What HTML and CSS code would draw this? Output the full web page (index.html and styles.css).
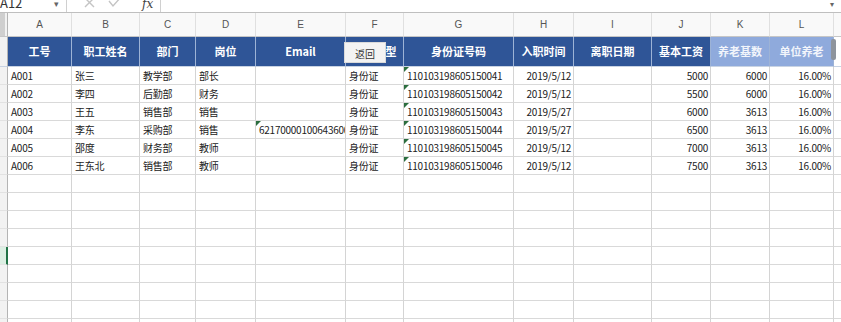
FILE: index.html
```html
<!DOCTYPE html>
<html lang="zh">

<head>
    <meta charset="utf-8">
    <meta name="viewport" content="width=device-width, initial-scale=1.0">
    <title>员工信息表</title>
    <link rel="stylesheet" href="styles.css">
</head>

<body>
    <div class="page">
        <div class="formula">
            <div class="namebox"><span>A12</span><span class="drop">&#9662;</span></div>
            <div class="tools">
                <svg width="12" height="12" viewBox="0 0 12 12"><path d="M1 -2 L10 7 M10 -2 L1 7" stroke="#c4c4c4" stroke-width="1.4" fill="none"/></svg>
                <svg width="14" height="12" viewBox="0 0 14 12"><path d="M1 1 L5 6 L13 -3" stroke="#c4c4c4" stroke-width="1.4" fill="none"/></svg>
                <span class="fx">fx</span>
            </div>
            <div class="input"><span class="drop">&#9662;</span></div>
        </div>

        <div class="sheet">
            <div class="row cols">
                <div class="cell rh corner"></div>
                <div class="cell">A</div><div class="cell">B</div><div class="cell">C</div><div class="cell">D</div>
                <div class="cell">E</div><div class="cell">F</div><div class="cell">G</div><div class="cell">H</div>
                <div class="cell">I</div><div class="cell">J</div><div class="cell">K</div><div class="cell">L</div>
                <div class="cell"></div>
            </div>

            <div class="row head">
                <div class="cell rh"></div>
                <div class="cell">工号</div><div class="cell">职工姓名</div><div class="cell">部门</div><div class="cell">岗位</div>
                <div class="cell">Email</div><div class="cell">证件类型</div><div class="cell">身份证号码</div><div class="cell">入职时间</div>
                <div class="cell">离职日期</div><div class="cell">基本工资</div><div class="cell light">养老基数</div><div class="cell light">单位养老</div>
                <div class="cell blank"></div>
            </div>

            <div class="row">
                <div class="cell rh"></div>
                <div class="cell">A001</div><div class="cell">张三</div><div class="cell">教学部</div><div class="cell">部长</div>
                <div class="cell"></div><div class="cell">身份证</div><div class="cell mark">110103198605150041</div><div class="cell num">2019/5/12</div>
                <div class="cell"></div><div class="cell num">5000</div><div class="cell num">6000</div><div class="cell num">16.00%</div>
                <div class="cell"></div>
            </div>
            <div class="row">
                <div class="cell rh"></div>
                <div class="cell">A002</div><div class="cell">李四</div><div class="cell">后勤部</div><div class="cell">财务</div>
                <div class="cell"></div><div class="cell">身份证</div><div class="cell mark">110103198605150042</div><div class="cell num">2019/5/12</div>
                <div class="cell"></div><div class="cell num">5500</div><div class="cell num">6000</div><div class="cell num">16.00%</div>
                <div class="cell"></div>
            </div>
            <div class="row">
                <div class="cell rh"></div>
                <div class="cell">A003</div><div class="cell">王五</div><div class="cell">销售部</div><div class="cell">销售</div>
                <div class="cell"></div><div class="cell">身份证</div><div class="cell mark">110103198605150043</div><div class="cell num">2019/5/27</div>
                <div class="cell"></div><div class="cell num">6000</div><div class="cell num">3613</div><div class="cell num">16.00%</div>
                <div class="cell"></div>
            </div>
            <div class="row">
                <div class="cell rh"></div>
                <div class="cell">A004</div><div class="cell">李东</div><div class="cell">采购部</div><div class="cell">销售</div>
                <div class="cell mark">62170000100643600</div><div class="cell">身份证</div><div class="cell mark">110103198605150044</div><div class="cell num">2019/5/27</div>
                <div class="cell"></div><div class="cell num">6500</div><div class="cell num">3613</div><div class="cell num">16.00%</div>
                <div class="cell"></div>
            </div>
            <div class="row">
                <div class="cell rh"></div>
                <div class="cell">A005</div><div class="cell">邵度</div><div class="cell">财务部</div><div class="cell">教师</div>
                <div class="cell"></div><div class="cell">身份证</div><div class="cell mark">110103198605150045</div><div class="cell num">2019/5/12</div>
                <div class="cell"></div><div class="cell num">7000</div><div class="cell num">3613</div><div class="cell num">16.00%</div>
                <div class="cell"></div>
            </div>
            <div class="row">
                <div class="cell rh"></div>
                <div class="cell">A006</div><div class="cell">王东北</div><div class="cell">销售部</div><div class="cell">教师</div>
                <div class="cell"></div><div class="cell">身份证</div><div class="cell mark">110103198605150046</div><div class="cell num">2019/5/12</div>
                <div class="cell"></div><div class="cell num">7500</div><div class="cell num">3613</div><div class="cell num">16.00%</div>
                <div class="cell"></div>
            </div>

            <div class="row empty"><div class="cell rh"></div><div class="cell"></div><div class="cell"></div><div class="cell"></div><div class="cell"></div><div class="cell"></div><div class="cell"></div><div class="cell"></div><div class="cell"></div><div class="cell"></div><div class="cell"></div><div class="cell"></div><div class="cell"></div><div class="cell"></div></div>
            <div class="row empty"><div class="cell rh"></div><div class="cell"></div><div class="cell"></div><div class="cell"></div><div class="cell"></div><div class="cell"></div><div class="cell"></div><div class="cell"></div><div class="cell"></div><div class="cell"></div><div class="cell"></div><div class="cell"></div><div class="cell"></div><div class="cell"></div></div>
            <div class="row empty"><div class="cell rh"></div><div class="cell"></div><div class="cell"></div><div class="cell"></div><div class="cell"></div><div class="cell"></div><div class="cell"></div><div class="cell"></div><div class="cell"></div><div class="cell"></div><div class="cell"></div><div class="cell"></div><div class="cell"></div><div class="cell"></div></div>
            <div class="row empty"><div class="cell rh"></div><div class="cell"></div><div class="cell"></div><div class="cell"></div><div class="cell"></div><div class="cell"></div><div class="cell"></div><div class="cell"></div><div class="cell"></div><div class="cell"></div><div class="cell"></div><div class="cell"></div><div class="cell"></div><div class="cell"></div></div>
            <div class="row empty"><div class="cell rh selected"></div><div class="cell"></div><div class="cell"></div><div class="cell"></div><div class="cell"></div><div class="cell"></div><div class="cell"></div><div class="cell"></div><div class="cell"></div><div class="cell"></div><div class="cell"></div><div class="cell"></div><div class="cell"></div><div class="cell"></div></div>
            <div class="row empty"><div class="cell rh"></div><div class="cell"></div><div class="cell"></div><div class="cell"></div><div class="cell"></div><div class="cell"></div><div class="cell"></div><div class="cell"></div><div class="cell"></div><div class="cell"></div><div class="cell"></div><div class="cell"></div><div class="cell"></div><div class="cell"></div></div>
            <div class="row empty"><div class="cell rh"></div><div class="cell"></div><div class="cell"></div><div class="cell"></div><div class="cell"></div><div class="cell"></div><div class="cell"></div><div class="cell"></div><div class="cell"></div><div class="cell"></div><div class="cell"></div><div class="cell"></div><div class="cell"></div><div class="cell"></div></div>
            <div class="row empty"><div class="cell rh"></div><div class="cell"></div><div class="cell"></div><div class="cell"></div><div class="cell"></div><div class="cell"></div><div class="cell"></div><div class="cell"></div><div class="cell"></div><div class="cell"></div><div class="cell"></div><div class="cell"></div><div class="cell"></div><div class="cell"></div></div>
            <div class="row empty"><div class="cell rh"></div><div class="cell"></div><div class="cell"></div><div class="cell"></div><div class="cell"></div><div class="cell"></div><div class="cell"></div><div class="cell"></div><div class="cell"></div><div class="cell"></div><div class="cell"></div><div class="cell"></div><div class="cell"></div><div class="cell"></div></div>
        </div>

        <div class="back">返回</div>
        <div class="thumb"></div>
    </div>
</body></html>
```

FILE: styles.css
```css
body {
    margin: 0;
    background-color: #ffffff;
    font-family: "Noto Sans CJK SC", "Noto Sans", sans-serif;
    color: #222222;
}

.page {
    position: relative;
    width: 841px;
    height: 322px;
    overflow: hidden;
}

/* formula bar */
.formula {
    display: flex;
    height: 12px;
    border-bottom: 1px solid #bfbfbf;
    overflow: hidden;
    align-items: flex-end;
}

.namebox {
    width: 66px;
    height: 12px;
    border-right: 1px solid #d0d0d0;
    display: flex;
    justify-content: space-between;
    align-items: flex-end;
    font-size: 13px;
    line-height: 12px;
    color: #333333;
}

.namebox span:first-child {
    margin-bottom: 3px;
}

.drop {
    font-size: 9px;
    color: #666666;
    margin-right: 7px;
    margin-bottom: 2px;
}

.tools {
    width: 94px;
    height: 12px;
    border-right: 1px solid #d0d0d0;
    display: flex;
    align-items: flex-start;
    padding-left: 17px;
    gap: 12px;
    box-sizing: border-box;
}

.tools svg {
    display: block;
}

.fx {
    font-family: "DejaVu Serif", serif;
    font-style: italic;
    font-size: 12px;
    line-height: 8px;
    color: #444444;
    margin-left: 8px;
}

.input {
    flex: 1;
    height: 12px;
    display: flex;
    justify-content: flex-end;
    align-items: flex-start;
}

.input .drop {
    margin-right: 7px;
    margin-bottom: 0;
    line-height: 8px;
    font-size: 8px;
}

/* grid */
.row {
    display: grid;
    grid-template-columns: 8px 64px 68px 56px 60px 90px 58px 110px 60px 78px 59px 59px 64px 60px;
    height: 18px;
}

.cell {
    box-sizing: border-box;
    border-right: 1px solid #d4d4d4;
    border-bottom: 1px solid #d9d9d9;
    padding: 0 3px;
    font-size: 10px;
    letter-spacing: -0.25px;
    line-height: 17px;
    white-space: nowrap;
    overflow: hidden;
    position: relative;
}

.num {
    text-align: right;
    padding-right: 2px;
}

.mark::before {
    content: "";
    position: absolute;
    left: 0;
    top: 0;
    border-top: 5px solid #2b6e3f;
    border-right: 5px solid transparent;
}

.rh {
    background-color: #f2f2f2;
    border-right-color: #b4b4b4;
    border-bottom-color: #e2e2e2;
    padding: 0;
}

.rh.selected {
    background-color: #dcefe3;
    border-right: 2px solid #217346;
}

.cols {
    height: 24px;
}

.cols .cell {
    background-color: #f9f9f9;
    border-right-color: #e0e0e0;
    border-bottom-color: #c6c6c6;
    text-align: center;
    font-family: "Liberation Sans", sans-serif;
    font-size: 10px;
    letter-spacing: 0;
    line-height: 23px;
    color: #555555;
}

.cols .corner {
    background: linear-gradient(to right, #cfcfcf 0, #cfcfcf 5px, #f2f2f2 5px);
    border-right-color: #b4b4b4;
}

.head {
    height: 30px;
}

.head .cell {
    background-color: #2f5597;
    border-right-color: #9db3d6;
    border-bottom-color: #c8d3e3;
    color: #ffffff;
    font-weight: bold;
    font-size: 11px;
    letter-spacing: 0;
    line-height: 29px;
    text-align: center;
}

.head .light {
    background-color: #8faadc;
    color: #f2f5fb;
}

.head .rh,
.head .blank {
    background-color: #ffffff;
    border-right-color: #b4b4b4;
}

.head .rh {
    background-color: #f2f2f2;
}

.back {
    position: absolute;
    left: 344px;
    top: 42px;
    width: 42px;
    height: 21px;
    box-sizing: border-box;
    background-color: #f3f3f3;
    border: 1px solid #dadada;
    font-size: 10px;
    line-height: 22px;
    text-align: center;
    color: #333333;
}

.thumb {
    position: absolute;
    left: 831px;
    top: 39px;
    width: 5px;
    height: 21px;
    border-radius: 2px;
    background-color: #8e949c;
}
```
